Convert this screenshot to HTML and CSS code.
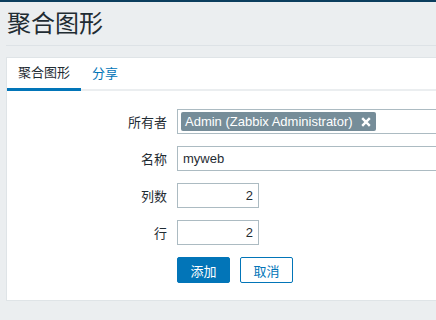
FILE: index.html
```html
<!DOCTYPE html>
<html lang="zh">
<head>
<meta charset="utf-8">
<link rel="stylesheet" href="styles.css">
</head>
<body>
<div class="page">
  <header class="header">
    <h1 class="title">聚合图形</h1>
  </header>
  <div class="card">
    <ul class="tabs">
      <li class="tab active">聚合图形</li>
      <li class="tab link">分享</li>
    </ul>
    <form class="form">
      <label class="label">所有者</label>
      <div class="multiselect"><span class="tag">Admin (Zabbix Administrator)<svg class="x" width="10" height="10" viewBox="0 0 10 10"><path d="M1.2 1.2 L8.8 8.8 M8.8 1.2 L1.2 8.8" stroke="#fff" stroke-width="2.4" fill="none"/></svg></span></div>
      <label class="label">名称</label>
      <div class="input wide">myweb</div>
      <label class="label">列数</label>
      <div class="input num">2</div>
      <label class="label">行</label>
      <div class="input num">2</div>
      <div></div>
      <div class="buttons">
        <button type="button" class="btn primary">添加</button>
        <button type="button" class="btn secondary">取消</button>
      </div>
    </form>
  </div>
</div>
</body>
</html>
```

FILE: styles.css
```css
html, body {
  margin: 0;
  padding: 0;
  background: #ebeef0;
  overflow: hidden;
}
body {
  font-family: "Liberation Sans", Arial, "Noto Sans CJK SC", sans-serif;
  font-size: 13px;
  color: #1f2c33;
  border-top: 2px solid #0b3e5e;
  height: 318px;
}
.page {
  width: 600px;
}
.header {
  margin: 0 0 0 6px;
  padding: 7px 0 7px 1px;
  border-bottom: 1px solid #dde2e6;
}
.title {
  margin: 0;
  font-size: 24px;
  font-weight: normal;
  line-height: 29px;
  color: #1f2c33;
}
.card {
  margin: 11px 0 0 6px;
  background: #fff;
  border: 1px solid #dfe4e7;
  height: 242px;
}
.tabs {
  list-style: none;
  margin: 0;
  padding: 0;
  display: flex;
  border-bottom: 2px solid #ebeef0;
  height: 31px;
}
.tab {
  padding: 0 11px;
  line-height: 31px;
  font-size: 13px;
  box-sizing: border-box;
  height: 33px;
}
.tab.active {
  border-bottom: 3px solid #0275b8;
  height: 33px;
  line-height: 30px;
}
.tab.link {
  color: #0275b8;
}
.form {
  display: grid;
  grid-template-columns: 160px auto;
  column-gap: 10px;
  row-gap: 12px;
  padding-top: 18px;
  align-items: center;
}
.label {
  text-align: right;
  font-size: 13px;
}
.multiselect, .input {
  box-sizing: border-box;
  border: 1px solid #acbbc2;
  background: #fff;
  height: 25px;
}
.multiselect {
  width: 453px;
  padding: 2px 3px;
}
.tag {
  display: inline-flex;
  align-items: center;
  background: #768d99;
  color: #fff;
  border-radius: 2px;
  height: 19px;
  padding: 0 5px 0 4px;
  font-size: 13px;
  line-height: 19px;
}
.x {
  margin-left: 8px;
  display: block;
}
.input {
  padding: 0 5px;
  line-height: 23px;
  font-size: 13px;
}
.input.wide {
  width: 453px;
}
.input.num {
  width: 82px;
  text-align: right;
}
.buttons {
  display: flex;
  gap: 10px;
}
.btn {
  box-sizing: border-box;
  width: 53px;
  height: 26px;
  border-radius: 2px;
  font-family: "Liberation Sans", "Noto Sans CJK SC", sans-serif;
  font-size: 13px;
  padding: 0;
  margin: 0;
  cursor: pointer;
}
.btn.primary {
  background: #0275b8;
  border: 1px solid #0275b8;
  color: #fff;
}
.btn.secondary {
  background: #fff;
  border: 1px solid #0275b8;
  color: #0275b8;
}
```
